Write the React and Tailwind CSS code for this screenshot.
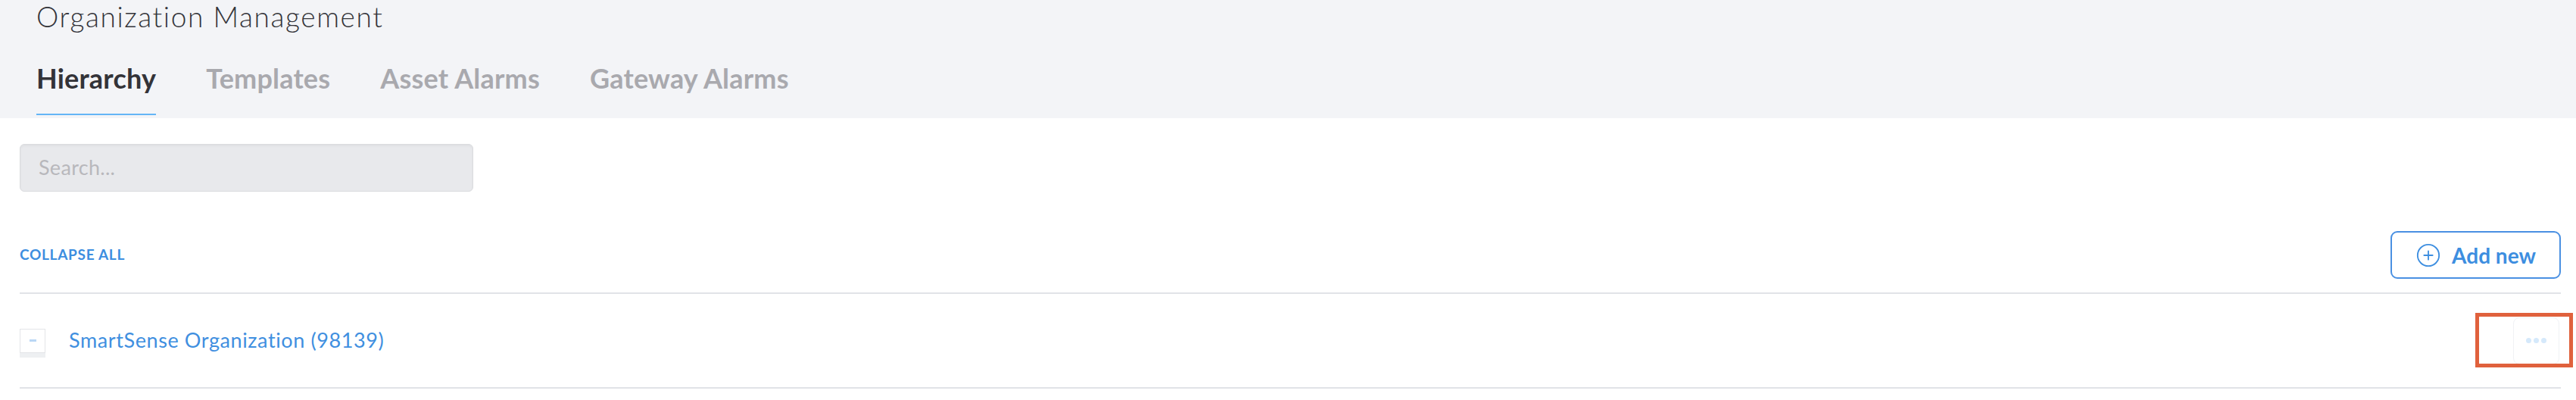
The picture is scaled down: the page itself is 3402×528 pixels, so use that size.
import React from 'react';
import { CirclePlus } from 'lucide-react';

const tabs = ['Hierarchy', 'Templates', 'Asset Alarms', 'Gateway Alarms'];

const App = () => {
  return (
    <div className="min-h-screen bg-white font-['Lato','Liberation_Sans',sans-serif]">
      {/* Page header */}
      <div className="bg-[#f3f4f7] px-[48px] pb-[4px]">
        <h1 className="text-[37px] leading-[44px] font-light tracking-[1.6px] text-[#34343a]">Organization Management</h1>
        <div className="mt-[37px] flex gap-[66px]">
          {tabs.map((tab, i) => (
            <div
              key={tab}
              className={
                i === 0
                  ? 'text-[36px] leading-[44px] font-bold tracking-[0.2px] text-[#333338] pb-[25px] border-b-2 border-[#64b5f6]'
                  : 'text-[36px] leading-[44px] font-bold tracking-[0.2px] text-[#a9a9ae] pb-[25px] border-b-2 border-transparent'
              }
            >
              {tab}
            </div>
          ))}
        </div>
      </div>

      <div className="pl-[26px] pr-[20px]">
        {/* Search */}
        <div className="mt-[34px] w-[599px] h-[63px] rounded-[6px] border border-[#dadbde] bg-[#e8e9ec] shadow-[inset_0_2px_3px_rgba(0,0,0,0.04)] flex items-center pl-[24px]">
          <span className="text-[27px] tracking-[0.3px] text-[#b8b8bc]">Search...</span>
        </div>

        {/* Actions */}
        <div className="mt-[52px] flex items-center justify-between">
          <button type="button" className="text-[19px] font-bold tracking-[0.7px] text-[#3d8ee0]">
            COLLAPSE ALL
          </button>
          <button
            type="button"
            className="w-[225px] h-[63px] rounded-[9px] border-2 border-[#4a90e2] flex items-center justify-center gap-[14px] text-[#3d8ee0]"
          >
            <CirclePlus size={34} strokeWidth={1.3} />
            <span className="text-[28px] font-bold">Add new</span>
          </button>
        </div>

        {/* Tree */}
        <div className="mt-[18px] border-t-2 border-b-2 border-[#e1e3e7]">
          <div className="relative h-[123px] flex items-center">
            <div className="w-[34px] h-[32px] bg-white border border-[#e4e5e8] shadow-[0_6px_0_#eef0f2] flex items-center justify-center">
              <div className="w-[9px] h-[3px] bg-[#b9d7f5]" />
            </div>
            <span className="ml-[31px] text-[27px] tracking-[0.6px] text-[#3f8fe0]">SmartSense Organization (98139)</span>
            <div className="ml-auto mr-[2px] w-[61px] h-[62px] rounded-[8px] border border-[#f0f2f5] flex items-center justify-center gap-[3px]">
              <span className="w-[7px] h-[7px] rounded-full bg-[#d5e9fb]" />
              <span className="w-[7px] h-[7px] rounded-full bg-[#d5e9fb]" />
              <span className="w-[7px] h-[7px] rounded-full bg-[#d5e9fb]" />
            </div>
            {/* highlight */}
            <div className="absolute right-[-16px] top-[25px] w-[129px] h-[72px] border-[5px] border-[#e0613c]" />
          </div>
        </div>
      </div>
    </div>
  );
};

export default App;
